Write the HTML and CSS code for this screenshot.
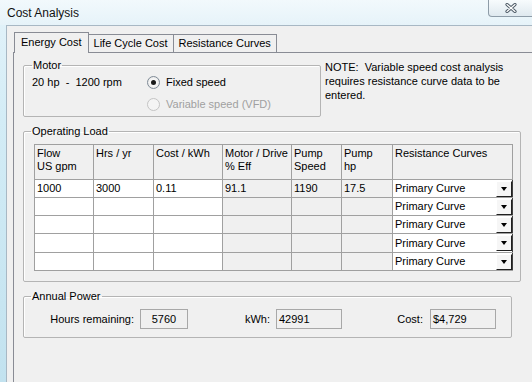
FILE: index.html
```html
<html>
	<head>
		<title>Cost Analysis</title>
		<link rel="stylesheet" href="styles.css">
	</head>
	<body>
		<div class="titlebar">
			<span class="title">Cost Analysis</span>
			<span class="close">
				<svg width="12" height="10" viewBox="0 0 12 10">
					<path d="M2 1.5 L10 8.5 M10 1.5 L2 8.5" stroke="#4d5a66" stroke-width="3.2" stroke-linecap="round"/>
					<path d="M2 1.5 L10 8.5 M10 1.5 L2 8.5" stroke="#fff" stroke-width="1.2" stroke-linecap="round"/>
				</svg>
			</span>
		</div>
		<div class="frame">
			<div class="client">
				<div class="tabs">
					<span class="tab active">Energy Cost</span>
					<span class="tab">Life Cycle Cost</span>
					<span class="tab">Resistance Curves</span>
				</div>
				<div class="pane">
					<div class="top-row">
						<fieldset class="group motor">
							<legend>Motor</legend>
							<div class="motor-body">
								<span class="rating">20 hp &nbsp;- &nbsp;1200 rpm</span>
								<div class="radios">
									<label class="radio checked"><span class="dot"></span>Fixed speed</label>
									<label class="radio disabled"><span class="dot"></span>Variable speed (VFD)</label>
								</div>
							</div>
						</fieldset>
						<p class="note">NOTE:&nbsp; Variable speed cost analysis requires resistance curve data to be entered.</p>
					</div>

					<fieldset class="group load">
						<legend>Operating Load</legend>
						<table class="grid">
							<colgroup>
								<col style="width:59px"><col style="width:60px"><col style="width:69px"><col style="width:69px">
								<col style="width:50px"><col style="width:51px"><col style="width:120px">
							</colgroup>
							<tr class="head">
								<th>Flow<br>US gpm</th>
								<th>Hrs / yr</th>
								<th>Cost / kWh</th>
								<th>Motor / Drive<br>% Eff</th>
								<th>Pump<br>Speed</th>
								<th>Pump<br>hp</th>
								<th>Resistance Curves</th>
							</tr>
							<tr>
								<td>1000</td><td>3000</td><td>0.11</td>
								<td class="ro">91.1</td><td class="ro">1190</td><td class="ro">17.5</td>
								<td class="combo"><div class="combo-box"><span>Primary Curve</span><span class="drop"></span></div></td>
							</tr>
							<tr>
								<td></td><td></td><td></td><td class="ro"></td><td class="ro"></td><td class="ro"></td>
								<td class="combo"><div class="combo-box"><span>Primary Curve</span><span class="drop"></span></div></td>
							</tr>
							<tr>
								<td></td><td></td><td></td><td class="ro"></td><td class="ro"></td><td class="ro"></td>
								<td class="combo"><div class="combo-box"><span>Primary Curve</span><span class="drop"></span></div></td>
							</tr>
							<tr class="tall">
								<td></td><td></td><td></td><td class="ro"></td><td class="ro"></td><td class="ro"></td>
								<td class="combo"><div class="combo-box"><span>Primary Curve</span><span class="drop"></span></div></td>
							</tr>
							<tr>
								<td></td><td></td><td></td><td class="ro"></td><td class="ro"></td><td class="ro"></td>
								<td class="combo"><div class="combo-box"><span>Primary Curve</span><span class="drop"></span></div></td>
							</tr>
						</table>
					</fieldset>

					<fieldset class="group power">
						<legend>Annual Power</legend>
						<div class="fields">
							<div class="field hours"><span class="lbl">Hours remaining:</span><span class="box center">5760</span></div>
							<div class="field kwh"><span class="lbl">kWh:</span><span class="box">42991</span></div>
							<div class="field cost"><span class="lbl">Cost:</span><span class="box">$4,729</span></div>
						</div>
					</fieldset>
				</div>
			</div>
		</div>
	</body>
</html>
```
FILE: styles.css
```css
body {
	margin: 0px;
	width: 532px;
	height: 382px;
	overflow: hidden;
	font-family: "Liberation Sans", Arial, sans-serif;
	font-size: 11px;
	color: #000;
	background: linear-gradient(180deg, #e4f3fa 0px, #d3ecf6 120px, #c2e2ef 382px);
}

.titlebar {
	height: 25px;
	display: flex;
	justify-content: space-between;
	align-items: flex-start;
	background: linear-gradient(180deg, #f2f9fc 0px, #e6f3f9 25px);
}

.title {
	font-size: 12px;
	padding: 6px 0 0 7px;
	color: #111;
}

.close {
	width: 44px;
	height: 16px;
	margin-right: -2px;
	display: flex;
	align-items: center;
	justify-content: center;
	background: linear-gradient(180deg, #f7fbfd, #dfe9ef);
	border: 1px solid #8e9ca8;
	border-top: none;
	border-bottom-left-radius: 4px;
}

.frame {
	padding-left: 6px;
}

.client {
	height: 357px;
	overflow: hidden;
	background: #f0f0f0;
	border-top: 1px solid #a8b8c4;
	border-left: 1px solid #a8b8c4;
}

/* tabs */

.tabs {
	display: flex;
	align-items: flex-end;
	padding: 7px 0 0 7px;
	height: 19px;
}

.tab {
	height: 17px;
	line-height: 17px;
	padding: 0 5px;
	border: 1px solid #898c95;
	border-bottom: none;
	border-left: none;
	background: #f0f0f0;
	white-space: nowrap;
}

.tab.active {
	height: 20px;
	line-height: 19px;
	padding: 0 6px;
	border-left: 1px solid #898c95;
	position: relative;
	top: 1px;
}

.pane {
	margin-left: 6px;
	border-top: 1px solid #898c95;
	border-left: 1px solid #898c95;
	padding: 6px 0 0 9px;
	height: 400px;
}

/* group boxes */

.group {
	margin: 0;
	border: 1px solid #b4b4b4;
	border-radius: 2px;
	box-shadow: inset 1px 1px 0 #fff;
	min-width: 0;
}

.group legend {
	padding: 0 1px;
	line-height: 13px;
}

.top-row {
	display: flex;
	align-items: flex-start;
}

.motor {
	width: 298px;
	box-sizing: border-box;
	padding: 2px 8px 5px 8px;
}

.motor-body {
	display: flex;
}

.rating {
	width: 115px;
	line-height: 13px;
	padding-top: 2px;
}

.radios {
	display: flex;
	flex-direction: column;
	gap: 7px;
}

.radio {
	display: flex;
	align-items: center;
	height: 13px;
	line-height: 13px;
	padding-top: 2px;
}

.dot {
	width: 11px;
	height: 11px;
	border-radius: 50%;
	border: 1px solid #7f8b97;
	background: radial-gradient(circle, #fff 0, #f4f4f4 50%, #dcdcdc 100%);
	margin-right: 6px;
	display: flex;
	align-items: center;
	justify-content: center;
}

.radio.checked .dot::after {
	content: "";
	width: 5px;
	height: 5px;
	border-radius: 50%;
	background: #1a1a1a;
}

.radio.disabled {
	color: #a0a0a0;
}

.radio.disabled .dot {
	border-color: #c4c4c4;
	background: #f4f4f4;
}

.note {
	margin: 1px 0 0 4px;
	width: 200px;
	line-height: 14px;
}

/* operating load */

.load {
	width: 498px;
	box-sizing: border-box;
	margin-top: 8px;
	padding: 6px 7px 10px 10px;
}

.load legend {
	margin-left: -3px;
}

.grid {
	border-collapse: collapse;
	table-layout: fixed;
	width: 479px;
	font-size: 11px;
	font-family: "Liberation Sans", Arial, sans-serif;
}

.grid th, .grid td {
	border: 1px solid #a0a0a0;
	padding: 0 2px;
	font-weight: normal;
	text-align: left;
	white-space: nowrap;
	overflow: hidden;
	line-height: 13px;
}

.grid th {
	height: 35px;
	vertical-align: top;
	padding-top: 2px;
	background: #f0f0f0;
}

.grid td {
	height: 18px;
	background: #fff;
	vertical-align: middle;
}

.grid tr.tall td {
	height: 19px;
}

.grid td.ro {
	background: #f0f0f0;
}

.grid td.combo {
	padding: 0 0 0 2px;
	border-right-color: #404040;
}

.combo-box {
	display: flex;
	align-items: center;
	justify-content: space-between;
	height: 17px;
}

.drop {
	width: 16px;
	height: 16px;
	box-sizing: border-box;
	background: #f6f6f6;
	border-top: 1px solid #fff;
	border-left: 1px solid #fff;
	border-right: 1px solid #202020;
	border-bottom: 1px solid #202020;
	display: flex;
	align-items: center;
	justify-content: center;
}

.drop::after {
	content: "";
	border-left: 3.5px solid transparent;
	border-right: 3.5px solid transparent;
	border-top: 4px solid #000;
}

/* annual power */

.power {
	width: 489px;
	box-sizing: border-box;
	margin-top: 8px;
	padding: 6px 0 8px 0;
}

.power legend {
	margin-left: 7px;
}

.fields {
	display: flex;
}

.field {
	display: flex;
	align-items: center;
}

.lbl {
	text-align: right;
}

.box {
	height: 20px;
	line-height: 18px;
	border: 1px solid #a8a8a8;
	background: #f0f0f0;
	padding: 0 2px;
	box-sizing: border-box;
	margin-left: 6px;
	width: 66px;
}

.box.center {
	text-align: center;
}

.hours .lbl { width: 110px; }
.hours .box { width: 48px; }
.kwh .lbl { width: 82px; }
.cost .lbl { width: 81px; }
.cost .box { margin-left: 7px; }
```
